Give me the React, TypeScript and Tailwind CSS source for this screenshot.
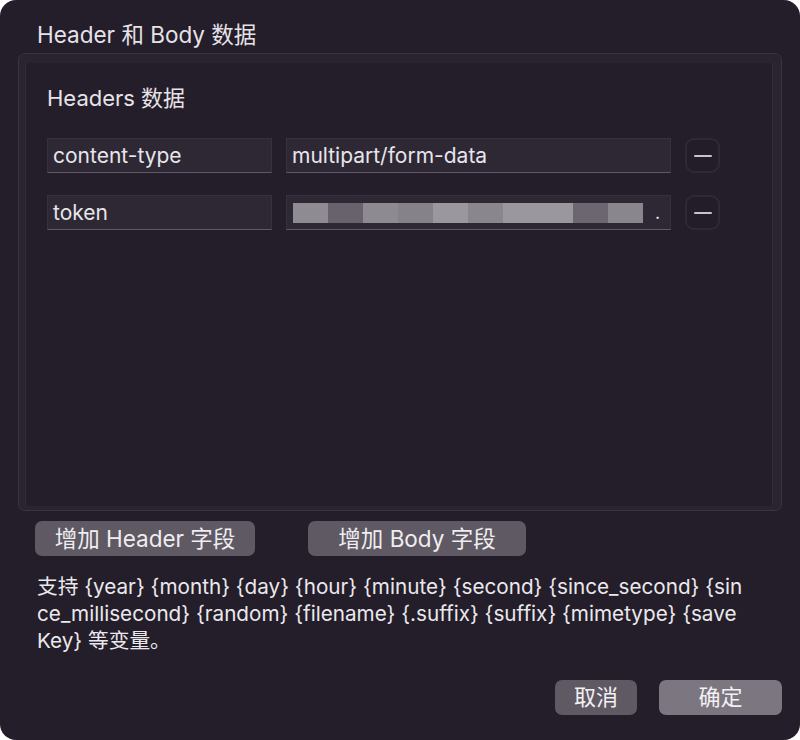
import React from 'react';

const font = { fontFamily: 'Inter, "Noto Sans CJK SC", sans-serif' };

const headers = [
  { key: 'content-type', value: 'multipart/form-data', masked: false },
  { key: 'token', value: '', masked: true },
];

const blurShades = [
  'bg-[#8f8b93]',
  'bg-[#67626b]',
  'bg-[#8e8a92]',
  'bg-[#86828a]',
  'bg-[#9b979f]',
  'bg-[#8a868e]',
  'bg-[#9a979e]',
  'bg-[#9b979f]',
  'bg-[#6b666f]',
  'bg-[#8a868e]',
];

function Field({ className, children }: { className: string; children: React.ReactNode }) {
  return (
    <div
      className={`h-[35px] flex items-center px-[5px] bg-[#2e2835] border border-[#37303e] border-b-[#5f5866] text-[21px] text-[#e8e5ea] ${className}`}
    >
      {children}
    </div>
  );
}

function MinusButton() {
  return (
    <button
      type="button"
      className="w-[35px] h-[35px] flex items-center justify-center rounded-[9px] border-2 border-[#2f2937] bg-[#231d29]"
    >
      <span className="block w-[18px] h-[2px] bg-[#c9c4cc] rounded-full" />
    </button>
  );
}

export default function App() {
  return (
    <div className="w-[800px] h-[740px] bg-white" style={font}>
      <div className="w-full h-full rounded-[16px] bg-[#231e29] flex flex-col text-[#e6e3e8]">
        <div className="pt-[22px] pl-[37px] h-[48px] text-[22.5px] leading-[26px]">Header 和 Body 数据</div>

        <div className="mt-[5px] mx-[18px] h-[458px] rounded-[7px] border border-[#3a3343] bg-[#2a2430] pt-[9px] pl-[6px] pr-[8px] pb-[4px]">
          <div className="h-full rounded-[3px] border-x border-[#332c3b] bg-[#241e2a] pl-[21px] pt-[22px]">
            <div className="text-[22px] leading-[26px]">Headers 数据</div>
            <div className="mt-[27px] flex flex-col gap-[22px]">
              {headers.map((h) => (
                <div key={h.key} className="flex items-center gap-[14px]">
                  <Field className="w-[225px]">{h.key}</Field>
                  <Field className="w-[385px]">
                    {h.masked ? (
                      <div className="flex items-center w-full">
                        <div className="flex h-[20px] mt-[1px] ml-[1px]">
                          {blurShades.map((c, i) => (
                            <span key={i} className={`block w-[35px] h-full ${c}`} />
                          ))}
                        </div>
                        <span className="ml-[12px] text-[18px]">.</span>
                      </div>
                    ) : (
                      h.value
                    )}
                  </Field>
                  <MinusButton />
                </div>
              ))}
            </div>
          </div>
        </div>

        <div className="mt-[10px] flex pl-[35px] gap-[53px]">
          <button type="button" className="w-[220px] h-[35px] rounded-[7px] bg-[#5f5964] text-[22.5px] leading-[35px] text-[#efedf0]">
            增加 Header 字段
          </button>
          <button type="button" className="w-[218px] h-[35px] rounded-[7px] bg-[#5f5964] text-[22.5px] leading-[35px] text-[#efedf0]">
            增加 Body 字段
          </button>
        </div>

        <div className="mt-[17px] pl-[37px] text-[20.7px] leading-[27px] text-[#ebe8ed]">
          <div>支持 {'{year}'} {'{month}'} {'{day}'} {'{hour}'} {'{minute}'} {'{second}'} {'{since_second}'} {'{sin'}</div>
          <div>{'ce_millisecond}'} {'{random}'} {'{filename}'} {'{.suffix}'} {'{suffix}'} {'{mimetype}'} {'{save'}</div>
          <div>{'Key}'} 等变量。</div>
        </div>

        <div className="mt-auto mb-[25px] flex justify-end gap-[22px] pr-[18px]">
          <button type="button" className="w-[82px] h-[35px] rounded-[7px] bg-[#5f5964] text-[22px] leading-[35px] text-[#f2f0f3]">
            取消
          </button>
          <button type="button" className="w-[123px] h-[35px] rounded-[7px] bg-[#7b7680] text-[22px] leading-[35px] text-[#f2f0f3]">
            确定
          </button>
        </div>
      </div>
    </div>
  );
}
